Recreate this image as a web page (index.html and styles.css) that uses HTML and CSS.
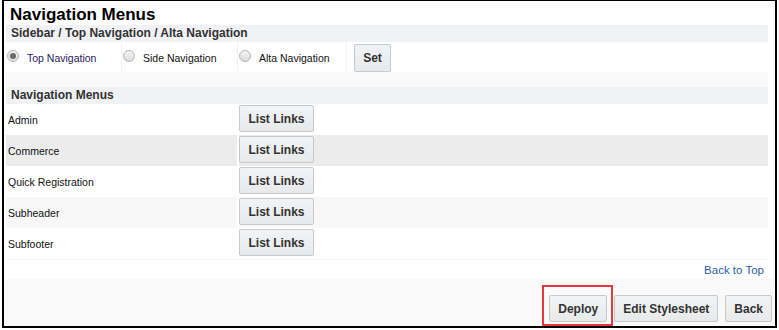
FILE: index.html
```html
<!DOCTYPE html>
<html lang="en">
<head>
  <meta charset="UTF-8" />
  <meta name="viewport" content="width=device-width, initial-scale=1.0" />
  <title>Navigation Menus</title>
  <link rel="stylesheet" href="styles.css">
</head>
<body>
  <div class="frame">
    <div class="content">
      <h1 class="page-title">Navigation Menus</h1>
      <div class="section-bar">Sidebar / Top Navigation / Alta Navigation</div>

      <div class="radio-row">
        <label class="radio-cell checked"><span class="radio"></span>Top Navigation</label>
        <label class="radio-cell"><span class="radio"></span>Side Navigation</label>
        <label class="radio-cell last"><span class="radio"></span>Alta Navigation</label>
        <div class="set-cell"><button class="btn btn-tall">Set</button></div>
      </div>

      <div class="spacer"></div>
      <div class="section-bar">Navigation Menus</div>

      <div class="menu-list">
        <div class="menu-row"><div class="menu-name">Admin</div><div class="menu-action"><button class="btn">List Links</button></div></div>
        <div class="menu-row dark"><div class="menu-name">Commerce</div><div class="menu-action"><button class="btn">List Links</button></div></div>
        <div class="menu-row"><div class="menu-name">Quick Registration</div><div class="menu-action"><button class="btn">List Links</button></div></div>
        <div class="menu-row light"><div class="menu-name">Subheader</div><div class="menu-action"><button class="btn">List Links</button></div></div>
        <div class="menu-row"><div class="menu-name">Subfooter</div><div class="menu-action"><button class="btn">List Links</button></div></div>
      </div>

      <div class="back-top"><a href="#">Back to Top</a></div>
    </div>

    <div class="footer">
      <span class="highlight"><button class="btn">Deploy</button></span>
      <button class="btn">Edit Stylesheet</button>
      <button class="btn">Back</button>
    </div>
  </div>
</body>
</html>
```
FILE: styles.css
```css
* {
  box-sizing: border-box;
  margin: 0;
  padding: 0;
}
body {
  font-family: 'Liberation Sans', Arial, sans-serif;
  background: #ffffff;
  color: #111;
}
.frame {
  margin-left: 2px;
  width: 775px;
  height: 328px;
  border: 2px solid #000;
  border-top-width: 1px;
  background: #fff;
  display: flex;
  flex-direction: column;
}
.content {
  padding: 0 7px 0 2px;
}
.page-title {
  font-size: 17px;
  font-weight: bold;
  line-height: 21px;
  height: 24px;
  padding: 3px 0 0 4px;
  color: #000;
}
.section-bar {
  height: 17px;
  line-height: 17px;
  padding-left: 5px;
  font-size: 12px;
  font-weight: bold;
  color: #333;
  background: #f1f2f5;
}
.radio-row {
  display: flex;
  height: 30px;
  background: #fff;
}
.radio-cell {
  display: flex;
  align-items: center;
  width: 116px;
  padding: 2px 0 0 1px;
  border-right: 1px solid #f3f3f3;
  font-size: 10.5px;
  color: #111;
}
.radio-cell.checked {
  color: #2a1a5c;
}
.radio-cell.last {
  width: 109px;
}
.radio {
  position: relative;
  width: 12px;
  height: 12px;
  margin-right: 8px;
  margin-top: -4px;
  border-radius: 50%;
  border: 1px solid #b4b4b4;
  background: linear-gradient(#f4f4f4, #dcdcdc);
}
.checked .radio::after {
  content: "";
  position: absolute;
  left: 2px;
  top: 2px;
  width: 6px;
  height: 6px;
  border-radius: 50%;
  background: #6b6b6b;
}
.set-cell {
  padding: 2px 0 0 7px;
}
.btn {
  font-family: 'Liberation Sans', Arial, sans-serif;
  font-size: 12px;
  font-weight: bold;
  color: #333;
  height: 27px;
  padding: 0 8px;
  background: linear-gradient(#f2f3f4, #e7e9eb);
  border: 1px solid #c6cacd;
  border-radius: 2px;
  cursor: pointer;
}
.btn-tall {
  height: 28px;
  width: 37px;
  padding: 0;
}
.spacer {
  height: 15px;
  background: #f9f9f9;
}
.menu-row {
  display: flex;
  height: 31px;
  background: #fff;
}
.menu-name {
  width: 231px;
  padding-left: 2px;
  display: flex;
  align-items: center;
  font-size: 10.5px;
  color: #111;
}
.menu-action {
  flex: 1;
  margin-left: 2px;
  padding-top: 1px;
}
.menu-row.dark .menu-name,
.menu-row.dark .menu-action {
  background: #ececec;
}
.menu-row.light .menu-name,
.menu-row.light .menu-action {
  background: #f8f8f8;
}
.menu-action .btn {
  width: 75px;
  padding: 0;
}
.back-top {
  height: 20px;
  border-top: 1px solid #f4f4f4;
  text-align: right;
  padding-right: 4px;
  line-height: 18px;
}
.back-top a {
  font-size: 11.5px;
  color: #2d5ca8;
  text-decoration: none;
}
.footer {
  flex: 1;
  background: #f9f9f9;
  display: flex;
  justify-content: flex-end;
  align-items: flex-end;
  padding-right: 3px;
}
.footer .btn {
  margin-bottom: 4px;
  margin-left: 7px;
}
.footer .highlight {
  border: 2px solid #e5393f;
  padding: 8px 4px 2px 5px;
  margin-right: -6px;
}
.footer .highlight .btn {
  margin: 0;
  width: 58px;
}
```
